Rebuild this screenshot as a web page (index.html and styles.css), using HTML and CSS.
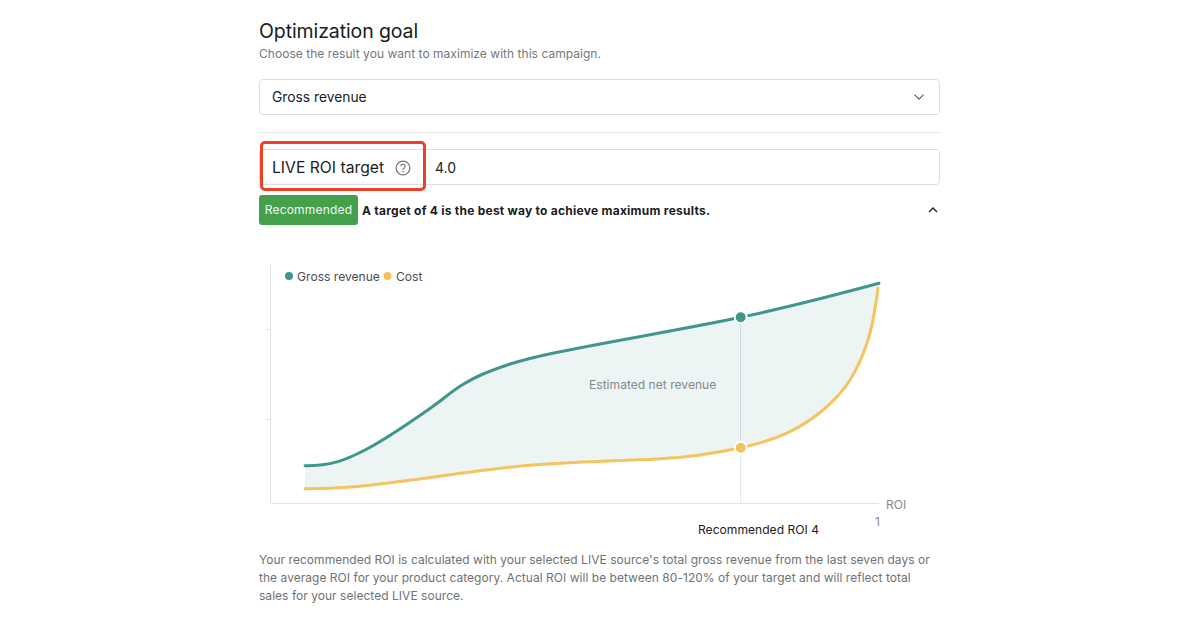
FILE: index.html
```html
<!DOCTYPE html>
<html lang="en">
<head>
  <meta charset="UTF-8">
  <title>Optimization goal</title>
  <link rel="stylesheet" href="styles.css">
</head>
<body>
  <main class="panel">
    <h1 class="title">Optimization goal</h1>
    <p class="subtitle">Choose the result you want to maximize with this campaign.</p>

    <div class="select-box">
      <span>Gross revenue</span>
      <svg class="chevron" width="10" height="6" viewBox="0 0 10 6"><path d="M.5 .7l4.5 4.5 4.5-4.5" fill="none" stroke="#55585c" stroke-width="1.1"/></svg>
    </div>

    <hr class="divider">

    <div class="target-row">
      <div class="target-label">
        <span>LIVE ROI target</span>
        <svg width="16" height="16" viewBox="0 0 16 16">
          <circle cx="8" cy="8" r="6.9" fill="none" stroke="#6f7276" stroke-width="1.2"/>
          <path d="M5.9 6.3a2.1 2.1 0 1 1 3.3 1.7c-.8.5-1.2.9-1.2 1.7" fill="none" stroke="#6f7276" stroke-width="1.2"/>
          <circle cx="8" cy="11.6" r=".8" fill="#6f7276"/>
        </svg>
      </div>
      <span class="target-value">4.0</span>
    </div>

    <div class="advice-row">
      <span class="badge">Recommended</span>
      <strong class="advice">A target of 4 is the best way to achieve maximum results.</strong>
      <svg class="caret" width="10" height="6" viewBox="0 0 10 6"><path d="M1 5l4-4 4 4" fill="none" stroke="#222" stroke-width="1.4"/></svg>
    </div>

    <svg class="chart" width="681" height="285" viewBox="259 255 681 285">
      <path class="net-area" d="M305 465.7C330 466 345 460.4 365 450C387.3 438.4 409.7 422.6 432 407C442 400 452 391 462 385C470.7 379.8 479.3 375.3 488 372C510.3 362.6 532.7 357.3 555 352.7C616.9 340 678.8 330.3 740.7 317.3C786.8 307.6 832.9 295.7 879 283.3L878 288C874.3 317.6 870.7 331.9 867 343C861.3 360.1 855.7 370.9 850 380C841 394.4 832 402.4 823 410C812 419.4 801 426.2 790 431.7C773.6 439.9 757.1 444.1 740.7 447.7C712.8 453.8 684.9 457.6 657 459C609.7 461.4 562.3 462 515 466.7C472.7 470.9 430.3 477.9 388 483C365 485.8 345 489 305 488.7Z"/>

      <path class="axis" d="M270.5 265V503.5H879M266 329.5H270M266 419.5H270"/>
      <path class="marker-line" d="M740.5 317V448"/>
      <path class="marker-line-low" d="M740.5 448V503"/>

      <path class="line-revenue" d="M305 465.7C330 466 345 460.4 365 450C387.3 438.4 409.7 422.6 432 407C442 400 452 391 462 385C470.7 379.8 479.3 375.3 488 372C510.3 362.6 532.7 357.3 555 352.7C616.9 340 678.8 330.3 740.7 317.3C786.8 307.6 832.9 295.7 879 283.3"/>
      <path class="line-cost" d="M305 488.7C345 489 365 485.8 388 483C430.3 477.9 472.7 470.9 515 466.7C562.3 462 609.7 461.4 657 459C684.9 457.6 712.8 453.8 740.7 447.7C757.1 444.1 773.6 439.9 790 431.7C801 426.2 812 419.4 823 410C832 402.4 841 394.4 850 380C855.7 370.9 861.3 360.1 867 343C870.7 331.9 874.3 317.6 878 288"/>

      <circle class="dot-revenue" cx="740.7" cy="317.3" r="6"/>
      <circle class="dot-cost" cx="740.7" cy="447.7" r="6"/>

      <circle cx="289" cy="276" r="4" fill="#40968f"/>
      <text class="legend" x="297" y="280.5">Gross revenue</text>
      <circle cx="387.5" cy="276" r="4" fill="#f5c059"/>
      <text class="legend" x="396" y="280.5">Cost</text>

      <text class="net-label" x="589" y="389">Estimated net revenue</text>
      <text class="axis-label" x="886" y="508.5">ROI</text>
      <text class="axis-label" x="875" y="526">1</text>
      <text class="marker-label" x="698" y="533.5">Recommended ROI 4</text>
    </svg>

    <p class="note">Your recommended ROI is calculated with your selected LIVE source's total gross revenue from the last seven days or the average ROI for your product category. Actual ROI will be between 80-120% of your target and will reflect total sales for your selected LIVE source.</p>
  </main>
</body>
</html>
```

FILE: styles.css
```css
*, *::after {
  box-sizing: border-box;
}

body {
  margin: 0;
  background-color: #fff;
  font-family: Inter, "Liberation Sans", sans-serif;
  color: #1a1c1f;
}

.panel {
  width: 681px;
  margin-left: 259px;
  padding-top: 19px;
}

.title {
  margin: 0;
  font-size: 19.5px;
  font-weight: 400;
  line-height: 24px;
  letter-spacing: -0.1px;
}

.subtitle {
  margin: 3px 0 0;
  font-size: 12px;
  line-height: 16px;
  letter-spacing: 0.035px;
  color: #75787c;
}

.select-box {
  display: flex;
  justify-content: space-between;
  align-items: center;
  height: 36px;
  margin-top: 17px;
  padding: 0 15px 0 12px;
  border: 1px solid #dcdee0;
  border-radius: 4px;
  font-size: 13.8px;
}

.divider {
  height: 1px;
  margin: 17px 0 16px;
  border: 0;
  background-color: #e6e7e9;
}

.target-row {
  display: flex;
  align-items: center;
  height: 36px;
  border: 1px solid #dcdee0;
  border-radius: 4px;
}

.target-label {
  position: relative;
  display: flex;
  justify-content: space-between;
  align-items: center;
  align-self: stretch;
  width: 166px;
  padding: 1px 15px 0 12px;
  font-size: 15.7px;
}

/* red highlight sits on top of the field */
.target-label::after {
  content: "";
  position: absolute;
  left: 0;
  top: -9px;
  width: 166px;
  height: 50px;
  border: 3px solid #ea4129;
  border-radius: 5px;
}

.target-value {
  margin-left: 9px;
  padding-top: 1px;
  font-size: 14px;
}

.advice-row {
  display: flex;
  align-items: center;
  margin-top: 10px;
}

.badge {
  width: 99px;
  height: 30px;
  border-radius: 3px;
  background-color: #45a04c;
  color: #f2f8f2;
  font-size: 12px;
  line-height: 30px;
  letter-spacing: 0.2px;
  text-align: center;
}

.advice {
  margin-left: 4px;
  font-size: 12px;
  font-weight: 700;
  letter-spacing: 0.25px;
}

.caret {
  margin-left: auto;
  margin-right: 2px;
}

.chart {
  display: block;
  margin-top: 30px;
}

.net-area {
  fill: #edf5f4;
}

.axis {
  fill: none;
  stroke: #e2e3e5;
  stroke-width: 1;
}

.marker-line {
  stroke: #cfd8da;
  stroke-width: 1;
}

.marker-line-low {
  stroke: #e3eaec;
  stroke-width: 1;
}

.line-revenue,
.line-cost {
  fill: none;
  stroke-width: 3;
  stroke-linecap: round;
}

.line-revenue {
  stroke: #40968f;
}

.line-cost {
  stroke: #f5c35f;
}

.dot-revenue,
.dot-cost {
  stroke: #fff;
  stroke-width: 2;
}

.dot-revenue {
  fill: #40968f;
}

.dot-cost {
  fill: #f5c059;
}

.legend {
  font-size: 12.1px;
  fill: #4b4e52;
}

.net-label,
.axis-label {
  font-size: 12.1px;
  fill: #86898c;
}

.marker-label {
  font-size: 12.1px;
  fill: #1a1c1f;
}

.note {
  margin: 11px 0 0;
  font-size: 12px;
  line-height: 18px;
  letter-spacing: 0.035px;
  color: #6f7276;
}
```
